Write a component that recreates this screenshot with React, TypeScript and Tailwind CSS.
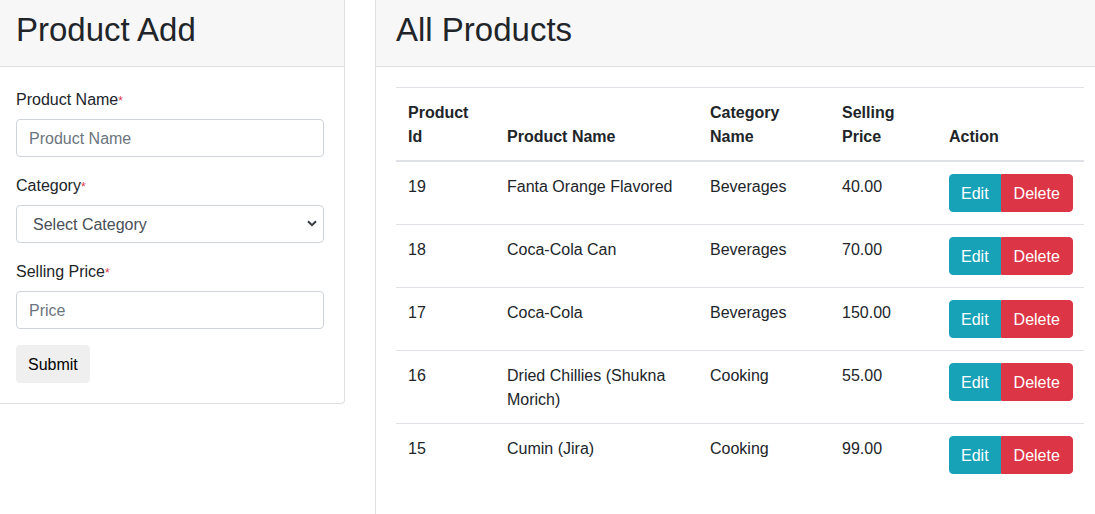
import React from 'react';

type Product = { id: number; name: string; category: string; price: string };

const products: Product[] = [
  { id: 19, name: 'Fanta Orange Flavored', category: 'Beverages', price: '40.00' },
  { id: 18, name: 'Coca-Cola Can', category: 'Beverages', price: '70.00' },
  { id: 17, name: 'Coca-Cola', category: 'Beverages', price: '150.00' },
  { id: 16, name: 'Dried Chillies (Shukna Morich)', category: 'Cooking', price: '55.00' },
  { id: 15, name: 'Cumin (Jira)', category: 'Cooking', price: '99.00' },
];

function Label({ text }: { text: string }) {
  return (
    <label className="block h-6 mb-2 pt-[2px] leading-[22px]">
      {text}
      <span className="text-[#dc3545] text-[12px] leading-none">*</span>
    </label>
  );
}

export default function App() {
  return (
    <div
      className="w-[1095px] h-[514px] overflow-hidden bg-white text-[#212529] text-base flex items-start"
      style={{ fontFamily: '"Liberation Sans", Arial, sans-serif' }}
    >
      {/* left: product add */}
      <div className="w-[345px] shrink-0 border-r border-b border-[#dfdfdf] rounded-br">
        <div className="bg-[#f7f7f7] border-b border-[#dfdfdf] pt-[10px] pb-4 px-4">
          <h1 className="text-[33px] leading-[40px]">Product Add</h1>
        </div>
        <form className="pt-5 pb-5 px-4" onSubmit={(e) => e.preventDefault()}>
          <div className="mb-4">
            <Label text="Product Name" />
            <input
              placeholder="Product Name"
              className="block w-[308px] h-[38px] border border-[#ced4da] rounded px-3 pt-[2px] text-[#495057] placeholder:text-[#6c757d] outline-none"
            />
          </div>
          <div className="mb-4">
            <Label text="Category" />
            <div className="relative w-[308px]">
              <select className="block w-full h-[38px] border border-[#ced4da] rounded pl-4 pr-8 pt-[2px] text-[#495057] bg-white appearance-none outline-none">
                <option>Select Category</option>
                <option>Beverages</option>
                <option>Cooking</option>
              </select>
              <svg
                className="absolute right-[7px] top-[15px] pointer-events-none"
                width="10"
                height="7"
                viewBox="0 0 10 7"
              >
                <path d="M1 1.2 L5 5.2 L9 1.2" fill="none" stroke="#343a40" strokeWidth="2" />
              </svg>
            </div>
          </div>
          <div className="mb-4">
            <Label text="Selling Price" />
            <input
              placeholder="Price"
              className="block w-[308px] h-[38px] border border-[#ced4da] rounded px-3 pt-[2px] text-[#495057] placeholder:text-[#6c757d] outline-none"
            />
          </div>
          <button type="submit" className="h-[38px] px-3 pt-[2px] rounded bg-[#efefef] text-black leading-6">
            Submit
          </button>
        </form>
      </div>

      {/* right: all products */}
      <div className="ml-[30px] flex-1 h-[530px] border-l border-[#dfdfdf]">
        <div className="bg-[#f7f7f7] border-b border-[#dfdfdf] pt-[10px] pb-4 px-5">
          <h1 className="text-[33px] leading-[40px]">All Products</h1>
        </div>
        <div className="pt-5 pl-5">
          <table className="table-fixed w-[688px] border-collapse leading-6">
            <colgroup>
              <col className="w-[99px]" />
              <col className="w-[203px]" />
              <col className="w-[132px]" />
              <col className="w-[107px]" />
              <col className="w-[147px]" />
            </colgroup>
            <thead>
              <tr className="text-left align-bottom">
                <th className="px-3 pt-[13px] pb-[11px] border-t border-b-2 border-[#dee2e6] font-bold">Product Id</th>
                <th className="px-3 pt-[13px] pb-[11px] border-t border-b-2 border-[#dee2e6] font-bold">Product Name</th>
                <th className="px-3 pt-[13px] pb-[11px] border-t border-b-2 border-[#dee2e6] font-bold">Category Name</th>
                <th className="px-3 pt-[13px] pb-[11px] border-t border-b-2 border-[#dee2e6] font-bold">Selling Price</th>
                <th className="px-3 pt-[13px] pb-[11px] border-t border-b-2 border-[#dee2e6] font-bold">Action</th>
              </tr>
            </thead>
            <tbody>
              {products.map((p, i) => {
                const line = i > 0 ? 'border-t border-[#dee2e6]' : '';
                return (
                  <tr key={p.id} className="align-top">
                    <td className={`px-3 pt-[13px] pb-[11px] ${line}`}>{p.id}</td>
                    <td className={`px-3 pt-[13px] pb-[11px] ${line}`}>{p.name}</td>
                    <td className={`px-3 pt-[13px] pb-[11px] ${line}`}>{p.category}</td>
                    <td className={`px-3 pt-[13px] pb-[11px] ${line}`}>{p.price}</td>
                    <td className={`p-3 ${line}`}>
                      <div className="inline-flex">
                        <button className="h-[38px] px-[11px] pt-[2px] bg-[#17a2b8] border border-[#17a2b8] text-white rounded-l">
                          Edit
                        </button>
                        <button className="h-[38px] px-3 pt-[2px] bg-[#dc3545] border border-[#dc3545] text-white rounded-r">
                          Delete
                        </button>
                      </div>
                    </td>
                  </tr>
                );
              })}
            </tbody>
          </table>
        </div>
      </div>
    </div>
  );
}
